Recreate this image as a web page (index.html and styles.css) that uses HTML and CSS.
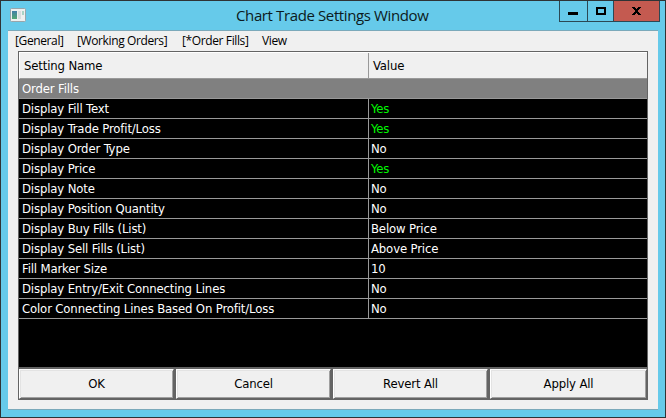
FILE: index.html
```html
<!DOCTYPE html>
<html lang="en">
<head>
<meta charset="utf-8">
<title>Chart Trade Settings Window</title>
<link rel="stylesheet" href="styles.css">
</head>
<body>
<div class="window">
  <header class="titlebar">
    <svg class="app-icon" width="16" height="14" viewBox="0 0 16 14">
      <defs><linearGradient id="g" x1="0" y1="0" x2="0" y2="1"><stop offset="0" stop-color="#437fa8"/><stop offset="1" stop-color="#54a873"/></linearGradient></defs>
      <rect x=".5" y=".5" width="15" height="13" rx="1" fill="#eef0f0" stroke="#99a5aa"/>
      <rect x="2" y="3" width="5" height="8" fill="url(#g)"/>
      <rect x="8" y="3" width="3" height="8" fill="#d8dddd"/>
      <rect x="12" y="3" width="2" height="4" fill="#a9d3c6"/>
    </svg>
    <h1 class="title">Chart Trade Settings Window</h1>
    <div class="controls">
      <span class="control minimize"><svg width="10" height="3"><path d="M0 0h10v3H0z"/></svg></span>
      <span class="control maximize"><svg width="10" height="8"><path fill-rule="evenodd" d="M0 0h10v8H0zM2 2v4h6V2z"/></svg></span>
      <span class="control close"><svg width="9" height="8" shape-rendering="crispEdges"><path d="M0 0h3v1h1v1h1V1h1V0h3v1H8v1H7v1H6v2h1v1h1v1h1v1H6V7H5V6H4v1H3v1H0V7h1V6h1V5h1V3H2V2H1V1H0z"/></svg></span>
    </div>
  </header>
  <main class="client">
    <nav class="menu"><span class="m1">[General]</span><span class="m2">[Working Orders]</span><span class="m3">[*Order Fills]</span><span class="m4">View</span></nav>
    <section class="panel">
      <div class="head"><span class="name">Setting Name</span><span class="value">Value</span></div>
      <div class="group">Order Fills</div>
      <div class="row"><span class="name">Display Fill Text</span><span class="value yes">Yes</span></div>
      <div class="row"><span class="name">Display Trade Profit/Loss</span><span class="value yes">Yes</span></div>
      <div class="row"><span class="name">Display Order Type</span><span class="value">No</span></div>
      <div class="row"><span class="name">Display Price</span><span class="value yes">Yes</span></div>
      <div class="row"><span class="name">Display Note</span><span class="value">No</span></div>
      <div class="row"><span class="name">Display Position Quantity</span><span class="value">No</span></div>
      <div class="row"><span class="name">Display Buy Fills (List)</span><span class="value">Below Price</span></div>
      <div class="row"><span class="name">Display Sell Fills (List)</span><span class="value">Above Price</span></div>
      <div class="row"><span class="name">Fill Marker Size</span><span class="value">10</span></div>
      <div class="row"><span class="name">Display Entry/Exit Connecting Lines</span><span class="value">No</span></div>
      <div class="row"><span class="name">Color Connecting Lines Based On Profit/Loss</span><span class="value">No</span></div>
      <div class="empty"></div>
      <div class="buttons"><button>OK</button><button>Cancel</button><button>Revert All</button><button>Apply All</button></div>
    </section>
  </main>
</div>
</body>
</html>
```
FILE: styles.css
```css
* { box-sizing: border-box; }
body { margin: 0; }
.window {
  width: 666px; height: 418px;
  display: flex; flex-direction: column;
  padding: 0 7px 7px;
  border: 1px solid #2f3335;
  background: #66caea;
}
.titlebar { height: 29px; flex: none; display: flex; align-items: flex-start; }
.app-icon { margin: 7px 0 0 2px; flex: none; }
.title {
  margin: 0 0 0 210px; width: 323px; flex: none;
  font: 400 15px/29px "Open Sans", sans-serif;
  letter-spacing: -0.38px; white-space: nowrap; color: #0c1a20;
}
.controls { display: flex; width: 101px; height: 21px; flex: none; border: 1px solid #2b4854; border-top: 0; }
.control { display: flex; align-items: flex-start; }
.minimize { width: 27px; padding: 11px 0 0 8px; }
.maximize { width: 26px; padding: 6px 0 0 8px; border-left: 1px solid #2b4854; }
.close { width: 46px; padding: 6px 0 0 18px; background: #c45a50; border-left: 1px solid #2b4854; }
.client {
  flex: 1; min-height: 0; padding: 0 10px;
  background: #f0f0f0;
  border-top: 1px solid #7ba9ba; border-bottom: 1px solid #7ba9ba;
}
.menu {
  height: 20px; display: flex; margin-left: -3px; white-space: nowrap;
  font: 12px/20px "Open Sans", sans-serif; letter-spacing: -0.38px; color: #000;
}
.m1 { width: 62px; } .m2 { width: 105px; } .m3 { width: 80px; }
.panel {
  width: 630px; height: 349px; display: flex; flex-direction: column;
  border: 1px solid #646464; background: #000;
  font: 13px/20px "DejaVu Sans Condensed", "DejaVu Sans", sans-serif;
  font-stretch: condensed; letter-spacing: -0.15px; white-space: nowrap;
}
.head {
  height: 27px; flex: none; display: flex; line-height: 26px;
  background: #f0f0f0; color: #000;
  border-top: 1px solid #fff; border-left: 1px solid #fff; border-bottom: 1px solid #999;
}
.head .name { width: 349px; padding-left: 4px; }
.head .value { padding-left: 4px; }
.group { height: 20px; flex: none; padding-left: 3px; background: #808080; color: #fff; border-bottom: 1px solid #999; }
.row { height: 20px; flex: none; display: flex; color: #fff; border-bottom: 1px solid #999; }
.name { width: 350px; height: 100%; padding-left: 3px; border-right: 1px solid #999; }
.value { padding-left: 2px; }
.yes { color: #00f800; }
.empty { flex: 1; }
.buttons { display: grid; grid-template-columns: 155px 155px 155px 1fr; gap: 2px; height: 32px; flex: none; padding-top: 2px; background: #646464; }
button {
  margin: 0; padding: 0; font: inherit; letter-spacing: inherit; color: #000;
  background: #f0f0f0; border: 1px solid; border-color: #fff #646464 #646464 #fff;
  border-radius: 0;
  box-shadow: inset 1px 1px #e3e3e3, inset -1px -1px #a0a0a0;
}
```
